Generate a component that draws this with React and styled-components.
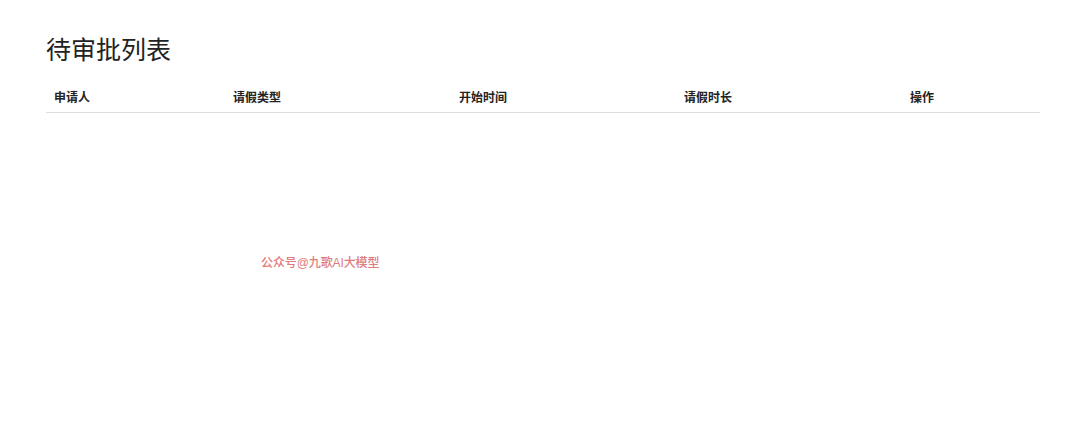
import React from 'react';
import styled, { createGlobalStyle } from 'styled-components';

const GlobalStyle = createGlobalStyle`
  html, body {
    margin: 0;
    padding: 0;
    background: #fff;
    font-family: "Liberation Sans", Arial, "Noto Sans CJK SC", sans-serif;
    color: #222;
  }
`;

// Page wrapper
const Page = styled.div`
  position: relative;
  width: 1078px;
  height: 430px;
  padding: 30px 38px 0 46px;
  box-sizing: border-box;
`;

const Title = styled.h2`
  margin: 0 0 11px;
  font-size: 25px;
  font-weight: 400;
  line-height: 40px;
  color: #222;
`;

// Table header row
const HeaderRow = styled.div`
  display: grid;
  grid-template-columns: 179px 226px 225px 226px 138px;
  border-bottom: 1px solid #dedede;
`;

const HeaderCell = styled.div`
  padding: 8px 8px 4px;
  font-size: 12px;
  font-weight: 700;
  line-height: 19px;
  color: #222;
`;

// Watermark overlay
const Watermark = styled.div`
  position: absolute;
  left: 261px;
  top: 255px;
  font-size: 12px;
  line-height: 17px;
  font-weight: 500;
  color: #e07b7b;
  letter-spacing: -0.1px;
`;

const columns = ['申请人', '请假类型', '开始时间', '请假时长', '操作'];

const App = () => {
  return (
    <Page>
      <GlobalStyle />
      <Title>待审批列表</Title>
      <HeaderRow>
        {columns.map((c) => (
          <HeaderCell key={c}>{c}</HeaderCell>
        ))}
      </HeaderRow>
      <Watermark>公众号@九歌AI大模型</Watermark>
    </Page>
  );
};

export default App;
